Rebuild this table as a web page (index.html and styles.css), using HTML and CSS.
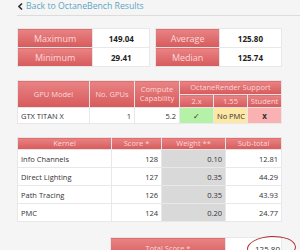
FILE: index.html
```html
<!DOCTYPE html>
<html lang="en">
<head>
  <meta charset="UTF-8">
  <meta name="viewport" content="width=device-width, initial-scale=1.0">
  <link rel="stylesheet" href="styles.css">
  <title>OctaneBench Result</title>
</head>
<body>
  <div class="page">
    <div class="back">
      <a href="#">
        <svg class="chev" width="5" height="7" viewBox="0 0 5 7"><polyline points="4,0.5 1,3.5 4,6.5" fill="none" stroke="#333" stroke-width="1.6"/></svg>
        Back to OctaneBench Results
      </a>
    </div>

    <div class="stats">
      <table class="stat-table left">
        <tr><th>Maximum</th><td>149.04</td></tr>
        <tr><th>Minimum</th><td>29.41</td></tr>
      </table>
      <table class="stat-table right">
        <tr><th>Average</th><td>125.80</td></tr>
        <tr><th>Median</th><td>125.74</td></tr>
      </table>
    </div>

    <table class="grid gpu">
      <tr class="h1">
        <th rowspan="2" class="c-model">GPU Model</th>
        <th rowspan="2" class="c-count">No. GPUs</th>
        <th rowspan="2" class="c-cc">Compute<br>Capability</th>
        <th colspan="3">OctaneRender Support</th>
      </tr>
      <tr class="h2">
        <th class="c-v">2.x</th>
        <th class="c-v">1.55</th>
        <th class="c-v">Student</th>
      </tr>
      <tr class="row">
        <td>GTX TITAN X</td>
        <td class="num">1</td>
        <td class="num">5.2</td>
        <td class="yes">&#10003;</td>
        <td class="part">No PMC</td>
        <td class="no">x</td>
      </tr>
    </table>

    <table class="grid kernels">
      <tr class="kh">
        <th class="c-kernel">Kernel</th>
        <th class="c-score">Score *</th>
        <th class="c-weight">Weight **</th>
        <th>Sub-total</th>
      </tr>
      <tr class="row"><td>Info Channels</td><td class="num">128</td><td class="num w">0.10</td><td class="num">12.81</td></tr>
      <tr class="row"><td>Direct Lighting</td><td class="num">127</td><td class="num w">0.35</td><td class="num">44.29</td></tr>
      <tr class="row"><td>Path Tracing</td><td class="num">126</td><td class="num w">0.35</td><td class="num">43.93</td></tr>
      <tr class="row"><td>PMC</td><td class="num">124</td><td class="num w">0.20</td><td class="num">24.77</td></tr>
    </table>

    <table class="total">
      <tr>
        <th>Total Score *</th>
        <td>125.80<span class="ring"></span></td>
      </tr>
    </table>
  </div>
</body>
</html>
```

FILE: styles.css
```css
body {
  margin: 0;
  padding: 0;
  background-color: #f5f5f5;
  font-family: "Open Sans", "Liberation Sans", sans-serif;
  color: #333;
  overflow: hidden;
}

.page {
  padding-left: 17px;
}

.back {
  height: 15px;
  border-bottom: 1px solid #dcdcdc;
  font-size: 8.7px;
  line-height: 13px;
}

.back a {
  color: #5ea5c2;
  text-decoration: none;
  display: flex;
  align-items: center;
  gap: 3px;
  padding-left: 1px;
}

table {
  border-collapse: collapse;
  background-color: #fff;
}

th {
  font-weight: normal;
  color: #fbd9d9;
  background: linear-gradient(#e98384, #d75a5b);
  border: 1px solid #e5e5e5;
}

td {
  border: 1px solid #e8e8e8;
  white-space: nowrap;
}

/* summary numbers */
.stats {
  display: flex;
  gap: 5px;
  margin-top: 12px;
  width: 265px;
}

.stat-table th {
  font-size: 9px;
  height: 18px;
  padding: 0;
}

.stat-table td {
  font-size: 8px;
  font-weight: bold;
  text-align: center;
  color: #222;
  padding: 0;
}

.left th { width: 75px; }
.left td { width: 57px; }
.right th { width: 63px; }
.right td { width: 62px; }

/* gpu + kernel tables */
.grid {
  width: 265px;
  font-size: 7.5px;
  table-layout: fixed;
}

.grid th {
  padding: 0;
  line-height: 9px;
}

.grid td {
  padding: 0 3px;
}

.gpu {
  margin-top: 13px;
}

.gpu .h1 th { height: 13px; }
.gpu .h2 th { height: 12px; }
.gpu .row td { height: 15px; }

.c-model { width: 71px; }
.c-count { width: 44px; }
.c-cc { width: 44px; }

.num {
  text-align: right;
}

.yes, .part, .no {
  text-align: center;
}

.yes { background-color: #b5f1a6; }
.part { background-color: #fde7a4; }
.no {
  background-color: #f9b2b1;
  font-weight: bold;
  font-size: 8px;
}

.kernels {
  margin-top: 13px;
}

.kernels .kh th { height: 11px; }
.kernels .row td { height: 17px; }

.c-kernel { width: 93px; }
.c-score { width: 49px; }
.c-weight { width: 63px; }

.kernels .w {
  background-color: #d9d9d9;
}

/* total score */
.total {
  margin-top: 15px;
  margin-left: 93px;
  width: 172px;
  table-layout: fixed;
}

.total th {
  width: 112px;
  height: 18px;
  font-size: 7.5px;
}

.total td {
  position: relative;
  text-align: center;
  font-size: 8px;
  padding: 0 0 0 28px;
}

.ring {
  position: absolute;
  left: 21px;
  top: -2px;
  width: 47px;
  height: 22px;
  border: 1px solid #b03038;
  border-radius: 50%;
  transform: rotate(-3deg);
}
```
